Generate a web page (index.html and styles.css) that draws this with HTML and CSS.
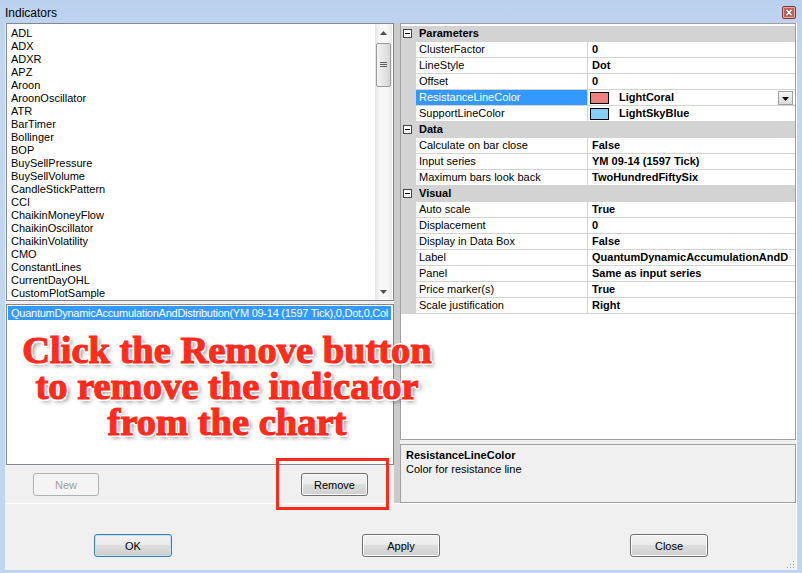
FILE: index.html
```html
<!DOCTYPE html>
<html lang="en">
<head>
    <meta charset="UTF-8">
    <title>Indicators</title>
    <link rel="stylesheet" href="styles.css">
</head>
<body>
    <div class="window">
        <div class="titlebar">
            <span class="title">Indicators</span>
            <span class="close-btn">
                <svg width="14" height="13" viewBox="0 0 14 13">
                    <rect x="0.5" y="0.5" width="13" height="12" rx="1.5" fill="#e3aaa3" stroke="#7d3a34"/>
                    <rect x="2" y="2" width="10" height="9" fill="#c9625a"/>
                    <path d="M4.5 3.8 L9.5 9.2 M9.5 3.8 L4.5 9.2" stroke="#5a5a5a" stroke-width="3"/>
                    <path d="M4.5 3.8 L9.5 9.2 M9.5 3.8 L4.5 9.2" stroke="#ffffff" stroke-width="1.6"/>
                </svg>
            </span>
        </div>
        <div class="client">
            <div class="split">
                <div class="left-pane">
                    <div class="listbox list-all">
                        <ul class="items">
                            <li>ADL</li>
                            <li>ADX</li>
                            <li>ADXR</li>
                            <li>APZ</li>
                            <li>Aroon</li>
                            <li>AroonOscillator</li>
                            <li>ATR</li>
                            <li>BarTimer</li>
                            <li>Bollinger</li>
                            <li>BOP</li>
                            <li>BuySellPressure</li>
                            <li>BuySellVolume</li>
                            <li>CandleStickPattern</li>
                            <li>CCI</li>
                            <li>ChaikinMoneyFlow</li>
                            <li>ChaikinOscillator</li>
                            <li>ChaikinVolatility</li>
                            <li>CMO</li>
                            <li>ConstantLines</li>
                            <li>CurrentDayOHL</li>
                            <li>CustomPlotSample</li>
                        </ul>
                        <div class="scrollbar">
                            <div class="sb-arrow">
                                <svg width="7" height="4" viewBox="0 0 7 4"><path d="M0 4 L3.5 0 L7 4 Z" fill="#4d4d4d"/></svg>
                            </div>
                            <div class="sb-track">
                                <div class="sb-thumb">
                                    <svg width="7" height="6" viewBox="0 0 7 6"><path d="M0 0.5 H7 M0 2.5 H7 M0 4.5 H7" stroke="#5e5e5e" stroke-width="1"/></svg>
                                </div>
                            </div>
                            <div class="sb-arrow">
                                <svg width="7" height="4" viewBox="0 0 7 4"><path d="M0 0 L3.5 4 L7 0 Z" fill="#4d4d4d"/></svg>
                            </div>
                        </div>
                    </div>
                    <div class="listbox list-applied">
                        <div class="applied-item">QuantumDynamicAccumulationAndDistribution(YM 09-14 (1597 Tick),0,Dot,0,Col</div>
                    </div>
                    <div class="pane-buttons">
                        <button class="btn btn-new" disabled>New</button>
                        <button class="btn btn-remove">Remove</button>
                    </div>
                </div>
                <div class="splitter"></div>
                <div class="right-pane">
                    <div class="grid">
                        <div class="row category">
                            <span class="strip"><svg width="9" height="9" viewBox="0 0 9 9"><rect x="0.5" y="0.5" width="8" height="8" fill="#fff" stroke="#444"/><path d="M2 4.5 H7" stroke="#000"/></svg></span>
                            <span class="cat-name">Parameters</span>
                        </div>
                        <div class="row"><span class="strip"></span><span class="name">ClusterFactor</span><span class="value">0</span></div>
                        <div class="row"><span class="strip"></span><span class="name">LineStyle</span><span class="value">Dot</span></div>
                        <div class="row"><span class="strip"></span><span class="name">Offset</span><span class="value">0</span></div>
                        <div class="row selected">
                            <span class="strip"></span>
                            <span class="name">ResistanceLineColor</span>
                            <span class="value">
                                <span class="swatch coral"></span>LightCoral
                                <span class="drop-btn"><svg width="7" height="4" viewBox="0 0 7 4"><path d="M0 0 L3.5 4 L7 0 Z" fill="#000"/></svg></span>
                            </span>
                        </div>
                        <div class="row"><span class="strip"></span><span class="name">SupportLineColor</span><span class="value"><span class="swatch skyblue"></span>LightSkyBlue</span></div>
                        <div class="row category">
                            <span class="strip"><svg width="9" height="9" viewBox="0 0 9 9"><rect x="0.5" y="0.5" width="8" height="8" fill="#fff" stroke="#444"/><path d="M2 4.5 H7" stroke="#000"/></svg></span>
                            <span class="cat-name">Data</span>
                        </div>
                        <div class="row"><span class="strip"></span><span class="name">Calculate on bar close</span><span class="value">False</span></div>
                        <div class="row"><span class="strip"></span><span class="name">Input series</span><span class="value">YM 09-14 (1597 Tick)</span></div>
                        <div class="row"><span class="strip"></span><span class="name">Maximum bars look back</span><span class="value">TwoHundredFiftySix</span></div>
                        <div class="row category">
                            <span class="strip"><svg width="9" height="9" viewBox="0 0 9 9"><rect x="0.5" y="0.5" width="8" height="8" fill="#fff" stroke="#444"/><path d="M2 4.5 H7" stroke="#000"/></svg></span>
                            <span class="cat-name">Visual</span>
                        </div>
                        <div class="row"><span class="strip"></span><span class="name">Auto scale</span><span class="value">True</span></div>
                        <div class="row"><span class="strip"></span><span class="name">Displacement</span><span class="value">0</span></div>
                        <div class="row"><span class="strip"></span><span class="name">Display in Data Box</span><span class="value">False</span></div>
                        <div class="row"><span class="strip"></span><span class="name">Label</span><span class="value">QuantumDynamicAccumulationAndD</span></div>
                        <div class="row"><span class="strip"></span><span class="name">Panel</span><span class="value">Same as input series</span></div>
                        <div class="row"><span class="strip"></span><span class="name">Price marker(s)</span><span class="value">True</span></div>
                        <div class="row"><span class="strip"></span><span class="name">Scale justification</span><span class="value">Right</span></div>
                    </div>
                    <div class="desc">
                        <div class="desc-title">ResistanceLineColor</div>
                        <div class="desc-text">Color for resistance line</div>
                    </div>
                </div>
            </div>
            <div class="dialog-buttons">
                <button class="btn btn-default">OK</button>
                <button class="btn">Apply</button>
                <button class="btn">Close</button>
            </div>

            <div class="callout">Click the Remove button<br>to remove the indicator<br>from the chart</div>
            <div class="highlight-box"></div>
            <svg class="size-grip" width="8" height="8" viewBox="0 0 8 8">
                <rect x="6" y="0" width="1" height="1" fill="#a0a0a0"/>
                <rect x="3" y="3" width="1" height="1" fill="#a0a0a0"/>
                <rect x="6" y="3" width="1" height="1" fill="#a0a0a0"/>
                <rect x="0" y="6" width="1" height="1" fill="#a0a0a0"/>
                <rect x="3" y="6" width="1" height="1" fill="#a0a0a0"/>
                <rect x="6" y="6" width="1" height="1" fill="#a0a0a0"/>
            </svg>
        </div>
    </div>
</body>
</html>
```

FILE: styles.css
```css
* {
    box-sizing: border-box;
}
body {
    margin: 0;
    font-family: "Liberation Sans", Arial, sans-serif;
    font-size: 11px;
    color: #000;
}
.window {
    width: 802px;
    height: 573px;
    background: linear-gradient(#bad1ee, #c3d7f0 60px, #c1d5ef);
    padding: 0 5px 3px 5px;
    display: flex;
    flex-direction: column;
}
.titlebar {
    height: 23px;
    flex: none;
    display: flex;
    align-items: center;
    justify-content: space-between;
}
.title {
    font-size: 12px;
    margin-top: 2px;
}
.close-btn {
    display: flex;
    margin-top: 2px;
    margin-right: 1px;
}
.client {
    flex: 1;
    position: relative;
    background: #f0f0f0;
    border-right: 1px solid #ffffff;
    display: flex;
    flex-direction: column;
}
.split {
    height: 481px;
    flex: none;
    display: flex;
    border-bottom: 1px solid #ffffff;
}

/* left side: indicator lists */
.left-pane {
    width: 389px;
    padding-left: 1px;
    display: flex;
    flex-direction: column;
}
.listbox {
    background: #ffffff;
    border: 1px solid #828790;
}
.list-all {
    height: 278px;
    display: flex;
}
.items {
    flex: 1;
    list-style: none;
    margin: 0;
    padding: 3px 0 0 4px;
    overflow: hidden;
}
.items li {
    height: 13px;
    line-height: 13px;
    white-space: nowrap;
}
.scrollbar {
    width: 17px;
    margin-right: 1px;
    display: flex;
    flex-direction: column;
    background: linear-gradient(90deg, #e6e6e6, #f7f7f7 30%, #f7f7f7 70%, #e9e9e9);
}
.sb-arrow {
    height: 17px;
    display: flex;
    align-items: center;
    justify-content: center;
}
.sb-track {
    flex: 1;
}
.sb-thumb {
    margin: 2px 1px 0 1px;
    height: 44px;
    border: 1px solid #9b9b9b;
    border-radius: 2px;
    background: linear-gradient(90deg, #f4f4f4, #e6e6e6 50%, #d6d6d6);
    display: flex;
    align-items: center;
    justify-content: center;
}
.list-applied {
    height: 161px;
    margin-top: 3px;
    padding: 1px 2px 0 1px;
    overflow: hidden;
}
.applied-item {
    height: 14px;
    line-height: 14px;
    padding-left: 3px;
    background: #3399ff;
    color: #ffffff;
    letter-spacing: -0.25px;
    white-space: nowrap;
    overflow: hidden;
}
.pane-buttons {
    flex: 1;
    display: flex;
    align-items: flex-start;
    padding: 8px 0 0 27px;
    gap: 202px;
}

/* buttons */
.btn {
    height: 23px;
    font-family: "Liberation Sans", Arial, sans-serif;
    font-size: 11px;
    color: #000;
    border: 1px solid #707070;
    border-radius: 3px;
    background: linear-gradient(#f2f2f2, #ebebeb 50%, #dddddd 50%, #cfcfcf);
    box-shadow: inset 0 0 0 1px #fbfbfb;
    padding: 0;
}
.btn-new {
    width: 66px;
    color: #a0a0a0;
    border-color: #adb2b5;
    background: #f4f4f4;
    box-shadow: none;
}
.btn-remove {
    width: 67px;
}
.btn-default {
    border-color: #3c7fb1;
    box-shadow: inset 0 0 0 1px #bfe4f7;
}

.splitter {
    width: 6px;
    background: #cbcbcb;
}

/* right side: property grid */
.right-pane {
    width: 396px;
    display: flex;
    flex-direction: column;
}
.grid {
    height: 417px;
    background: #ffffff;
    border: 1px solid #a0a0a0;
    padding-top: 2px;
    overflow: hidden;
}
.row {
    height: 16px;
    display: flex;
    border-bottom: 1px solid #d3d3d3;
    line-height: 15px;
}
.strip {
    width: 15px;
    flex: none;
    background: #d3d3d3;
    display: flex;
    align-items: center;
    justify-content: center;
}
.name {
    width: 172px;
    flex: none;
    padding-left: 3px;
    border-right: 1px solid #d3d3d3;
    white-space: nowrap;
    overflow: hidden;
}
.value {
    flex: 1;
    padding-left: 4px;
    font-weight: bold;
    white-space: nowrap;
    overflow: hidden;
    display: flex;
    align-items: center;
}
.category {
    background: #d3d3d3;
}
.category .strip {
    justify-content: flex-start;
    padding-left: 2px;
}
.cat-name {
    padding-left: 3px;
    font-weight: bold;
}
.selected .name {
    background: #3399ff;
    color: #ffffff;
}
.swatch {
    width: 19px;
    height: 12px;
    border: 1px solid #000;
    margin: 0 10px 0 -2px;
}
.coral {
    background: #f08080;
}
.skyblue {
    background: #87cefa;
}
.drop-btn {
    margin-left: auto;
    margin-right: 2px;
    width: 15px;
    height: 14px;
    border: 1px solid #a0a0a0;
    background: linear-gradient(#f4f4f4, #dcdcdc);
    display: flex;
    align-items: center;
    justify-content: center;
    padding-top: 2px;
}
.desc {
    height: 59px;
    margin-top: 4px;
    border: 1px solid #a0a0a0;
    padding: 3px 5px;
    line-height: 14px;
}
.desc-title {
    font-weight: bold;
}

/* bottom row */
.dialog-buttons {
    flex: 1;
    display: flex;
    align-items: flex-start;
    padding: 30px 0 0 89px;
    gap: 190px;
}
.dialog-buttons .btn {
    width: 78px;
}

/* tutorial overlay */
.callout {
    position: absolute;
    left: 0;
    top: 309px;
    width: 444px;
    text-align: center;
    font-family: "Liberation Serif", "Times New Roman", serif;
    font-weight: bold;
    font-size: 38.5px;
    line-height: 36px;
    color: #ff2b1c;
    -webkit-text-stroke: 1.2px #ff2b1c;
    text-shadow: 2px 0 #fff, -2px 0 #fff, 0 2px #fff, 0 -2px #fff,
        1.5px 1.5px #fff, -1.5px -1.5px #fff, 1.5px -1.5px #fff, -1.5px 1.5px #fff,
        3px 3px 4px rgba(0, 0, 0, 0.45);
    white-space: nowrap;
}
.highlight-box {
    position: absolute;
    left: 271px;
    top: 435px;
    width: 113px;
    height: 52px;
    border: 3px solid #ff2a1a;
}
.size-grip {
    position: absolute;
    right: 1px;
    bottom: 1px;
}
```
